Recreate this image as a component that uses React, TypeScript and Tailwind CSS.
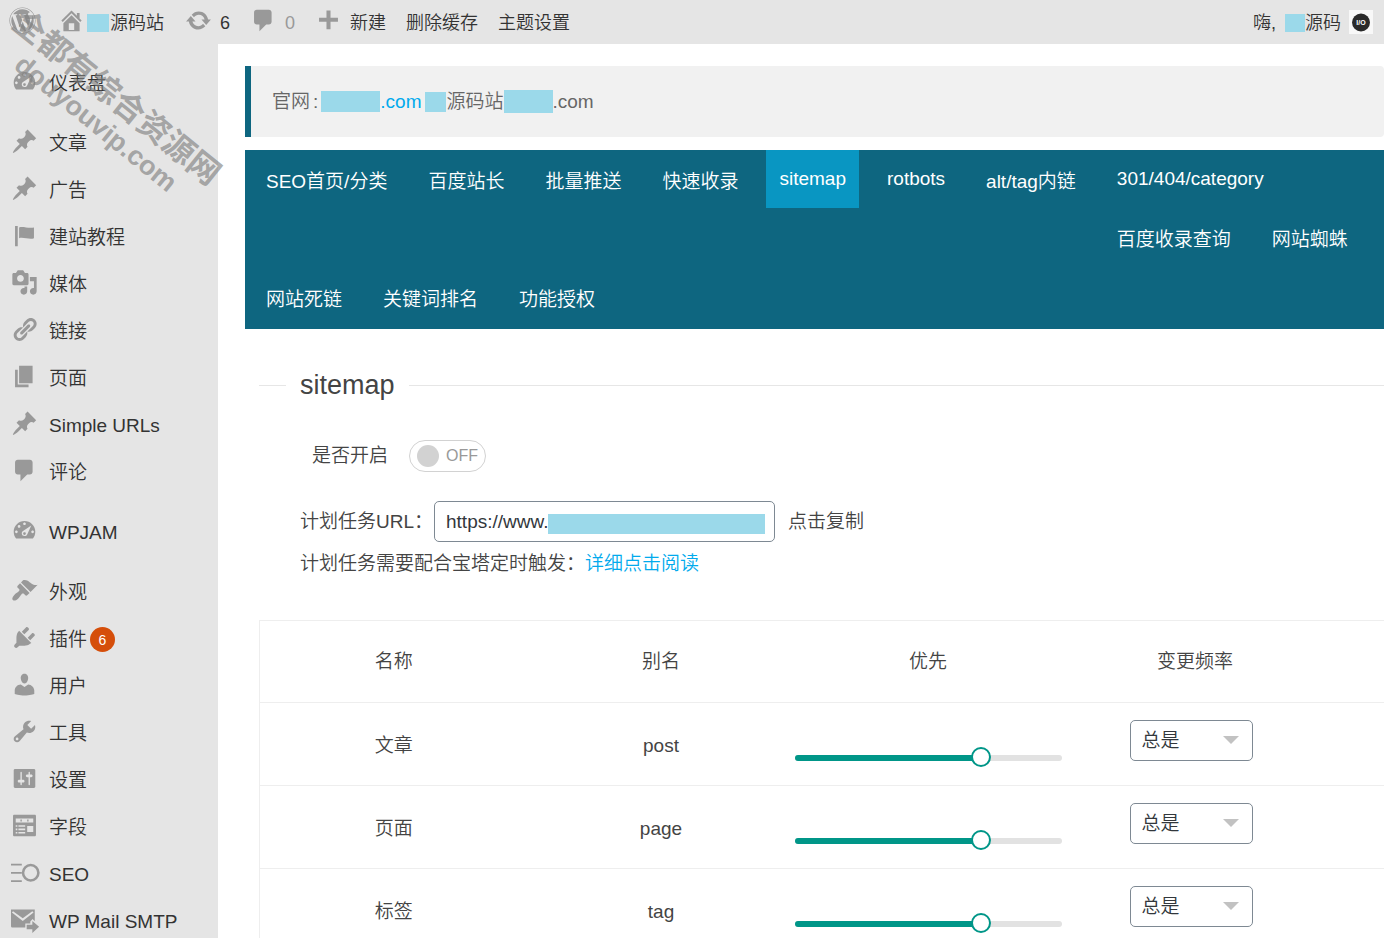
import { useState } from "react";
import type { ReactNode } from "react";
import { FaWordpress } from "react-icons/fa";

const paths: Record<string, string> = {
  home: "M16 8.5l1.53 1.53-1.06 1.06L10 4.6l-6.47 6.49-1.06-1.06L10 2.5l4 4v-2h2v4zm-6-2.46l6 5.99V18H4v-5.97zM12 17v-5H8v5h4z",
  update:
    "M10.2 3.28c3.53 0 6.43 2.61 6.92 6h2.08l-3.5 4-3.5-4h2.32c-.45-1.97-2.21-3.45-4.32-3.45-1.45 0-2.73.71-3.54 1.78L4.95 5.66C6.23 4.2 8.11 3.28 10.2 3.28zm-.4 13.44c-3.52 0-6.43-2.61-6.92-6H.8l3.5-4c1.17 1.33 2.33 2.67 3.5 4H5.48c.45 1.97 2.21 3.45 4.32 3.45 1.45 0 2.73-.71 3.54-1.78l1.71 1.95c-1.28 1.46-3.15 2.38-5.25 2.38z",
  comment: "M5 2h9c1.1 0 2 .9 2 2v7c0 1.1-.9 2-2 2h-2l-5 5v-5H5c-1.1 0-2-.9-2-2V4c0-1.1.9-2 2-2z",
  plus: "M17 8v3h-5.5v5.5h-3V11H3V8h5.500V2.500h3V8z",
  dashboard:
    "M3.76 16h12.48c1.1-1.37 1.76-3.11 1.76-5 0-4.42-3.58-8-8-8s-8 3.58-8 8c0 1.89.66 3.63 1.76 5zM10 4c.55 0 1 .45 1 1s-.45 1-1 1-1-.45-1-1 .45-1 1-1zM6 6c.55 0 1 .45 1 1s-.45 1-1 1-1-.45-1-1 .45-1 1-1zM4 10c.55 0 1 .45 1 1s-.45 1-1 1-1-.45-1-1 .45-1 1-1zm12 0c.55 0 1 .45 1 1s-.45 1-1 1-1-.45-1-1 .45-1 1-1zM15 6.300L9.200 10.200C8.300 10.700 7.900 11.500 8 12.400c.1 1 .9 1.700 2 1.700 1 0 1.700-.5 2.100-1.400zM10 11.300c.6 0 1 .4 1 1s-.4 1-1 1-1-.4-1-1 .4-1 1-1z",
  pin: "M10.44 3.02l1.82-1.82 6.36 6.35-1.83 1.82c-1.05-.68-2.48-.57-3.41.36l-.75.75c-.92.93-1.04 2.35-.35 3.41l-1.83 1.82-2.41-2.41-2.8 2.79c-.42.42-3.38 2.71-3.8 2.29s1.86-3.39 2.28-3.81l2.79-2.79L4.1 9.36l1.83-1.82c1.05.69 2.48.57 3.4-.36l.75-.75c.93-.92 1.05-2.35.36-3.41z",
  flag: "M5 18V3H3v15h2zm1-6V4c3-1 7 1 11 0v8c-3 1.27-8-1-11 0z",
  media:
    "M13 11V4c0-.55-.45-1-1-1h-1.67L9 1H5L3.67 3H2c-.55 0-1 .45-1 1v7c0 .55.45 1 1 1h10c.55 0 1-.45 1-1zM7 4.5c1.38 0 2.5 1.12 2.5 2.5S8.38 9.5 7 9.5 4.5 8.38 4.5 7 5.62 4.5 7 4.5zM14 6h5v10.5c0 1.38-1.12 2.5-2.5 2.5S14 17.88 14 16.5s1.12-2.5 2.5-2.5c.17 0 .34.02.5.05V9h-3V6zm-4 8.05V13h2v3.5c0 1.38-1.12 2.5-2.5 2.5S7 17.88 7 16.5 8.12 14 9.5 14c.17 0 .34.02.5.05z",
  link: "M17.74 2.76c1.68 1.69 1.68 4.41 0 6.1l-1.53 1.52c-1.12 1.12-2.7 1.47-4.14 1.09l2.62-2.61.76-.77.76-.76c.84-.84.84-2.2 0-3.04-.84-.85-2.2-.85-3.04 0l-.77.76-3.38 3.38c-.37-1.44-.02-3.02 1.1-4.14l1.52-1.53c1.69-1.68 4.42-1.68 6.1 0zM8.59 13.43l5.34-5.34c.42-.42.42-1.1 0-1.52-.44-.43-1.13-.39-1.53 0l-5.33 5.34c-.42.42-.42 1.1 0 1.52.44.43 1.13.39 1.52 0zm-.76 2.29l4.14-4.15c.38 1.44.03 3.02-1.09 4.14l-1.52 1.53c-1.69 1.68-4.41 1.68-6.1 0-1.68-1.68-1.68-4.42 0-6.1l1.53-1.52c1.12-1.12 2.7-1.47 4.14-1.1l-4.14 4.15c-.85.84-.85 2.2 0 3.05.84.84 2.2.84 3.04 0z",
  page: "M6 15V2h10v13H6zm-1 1h8v2H3V5h2v11z",
  brush:
    "M14.48 11.06L7.41 3.99l1.5-1.5c.5-.56 2.3-.47 3.51.32 1.21.8 1.43 1.28 2.91 2.1 1.18.64 2.45 1.26 4.45.85zm-.71.71L6.7 4.7 4.93 6.47c-.39.39-.39 1.02 0 1.41l1.06 1.06c.39.39.39 1.03 0 1.42-.6.6-1.43 1.11-2.21 1.69-.35.26-.7.53-1.01.84C1.43 14.23.4 16.08 1.4 17.07c.99 1 2.84-.03 4.18-1.36.31-.31.58-.66.85-1.02.57-.78 1.08-1.61 1.69-2.21.39-.39 1.02-.39 1.41 0l1.06 1.06c.39.39 1.02.39 1.41 0z",
  plug: "M13.11 4.36L9.87 7.6 8 5.73l3.24-3.24c.35-.34 1.05-.2 1.56.32.52.51.66 1.21.31 1.55zm-8 1.77l.91-1.12 9.01 9.01-1.19.84c-.71.71-2.63 1.16-3.82 1.16H6.14L4.9 17.26c-.59.59-1.54.59-2.12 0-.59-.58-.59-1.53 0-2.12l1.24-1.24v-3.88c0-1.13.4-3.19 1.09-3.89zm7.26 3.97l3.24-3.24c.34-.35 1.04-.21 1.55.31.52.51.66 1.21.31 1.55l-3.24 3.25z",
  user: "M10 9.25c-2.27 0-2.73-3.44-2.73-3.44C7 4.02 7.82 2 9.97 2c2.16 0 2.98 2.02 2.71 3.81 0 0-.41 3.44-2.68 3.44zm0 2.57L12.72 10c2.39 0 4.52 2.33 4.52 4.53v2.49s-3.65 1.13-7.24 1.13c-3.65 0-7.24-1.13-7.24-1.13v-2.49c0-2.25 1.94-4.48 4.47-4.48z",
  wrench:
    "M16.68 9.77c-1.34 1.34-3.3 1.67-4.95.99l-5.41 6.52c-.99.99-2.59.99-3.58 0s-.99-2.59 0-3.57l6.52-5.42c-.68-1.65-.35-3.61.99-4.95 1.28-1.28 3.12-1.62 4.72-1.06l-2.89 2.89 2.82 2.82 2.86-2.87c.53 1.58.18 3.39-1.08 4.65zM3.81 16.21c.4.39 1.04.39 1.43 0 .4-.4.4-1.04 0-1.43-.39-.4-1.03-.4-1.43 0-.39.39-.39 1.03 0 1.43z",
  sliders:
    "M18 16V4c0-.55-.45-1-1-1H3c-.55 0-1 .45-1 1v12c0 .55.45 1 1 1h14c.55 0 1-.45 1-1zM8 11h1c.55 0 1 .45 1 1s-.45 1-1 1H8v1.5c0 .28-.22.5-.5.5s-.5-.22-.5-.5V13H6c-.55 0-1-.45-1-1s.45-1 1-1h1V5.5c0-.28.22-.5.5-.5s.5.22.5.5V11zm5-2h-1c-.55 0-1-.45-1-1s.45-1 1-1h1V5.5c0-.28.22-.5.5-.5s.5.22.5.5V7h1c.55 0 1 .45 1 1s-.45 1-1 1h-1v5.5c0 .28-.22.5-.5.5s-.5-.22-.5-.5V9z",
  form: "M2.500 2h15c.6 0 1 .4 1 1v14c0 .6-.4 1-1 1h-15c-.6 0-1-.4-1-1V3c0-.6.4-1 1-1zM3.500 4.800h13v3h-13zM7 5.600v1.400h1V5.600zM12 5.600v1.400h1V5.600zM3.500 9.800h1.200V11H3.500zM5.500 9.800h5V11h-5zM3.500 12.300h1.200v1.200H3.500zM5.500 12.300h5v1.200h-5zM3.500 14.800h1.200V16H3.500zM5.500 14.800h5V16h-5zM12 10.300h4.500v4.500H12z",
  mail: "M0 2.500h17.600v8.800l-1.600-1.600-1.700 1.700v1.500h-3.700V16H1.200C.5 16 0 15.500 0 14.800zM1.500 3.800l-.8 1 8 6.400 8-6.400-.9-1L8.700 9zM11.600 13.900h4.200v-2.700l5 4.200-5 4.600v-2.800h-4.200z",
};

function Icon({ name, className = "size-[27px]" }: { name: string; className?: string }) {
  return (
    <svg viewBox="0 0 20 20" className={`${className} shrink-0 overflow-visible`} fill="currentColor" fillRule="evenodd" aria-hidden="true">
      {name === "seo" ? (
        <g fill="none" stroke="currentColor">
          <path d="M0 4.200h8M0 10.200h8M0 16.300h8" strokeWidth="1.300" />
          <circle cx="14.600" cy="10.200" r="5.700" strokeWidth="1.900" />
        </g>
      ) : (
        <path d={paths[name]} />
      )}
    </svg>
  );
}

function Mask({ className }: { className: string }) {
  return <span className={`inline-block shrink-0 bg-[#9bd9ea] ${className}`} />;
}

const menu: { icon: string; label: string; badge?: string }[][] = [
  [{ icon: "dashboard", label: "仪表盘" }],
  [
    { icon: "pin", label: "文章" },
    { icon: "pin", label: "广告" },
    { icon: "flag", label: "建站教程" },
    { icon: "media", label: "媒体" },
    { icon: "link", label: "链接" },
    { icon: "page", label: "页面" },
    { icon: "pin", label: "Simple URLs" },
    { icon: "comment", label: "评论" },
  ],
  [{ icon: "dashboard", label: "WPJAM" }],
  [
    { icon: "brush", label: "外观" },
    { icon: "plug", label: "插件", badge: "6" },
    { icon: "user", label: "用户" },
    { icon: "wrench", label: "工具" },
    { icon: "sliders", label: "设置" },
    { icon: "form", label: "字段" },
    { icon: "seo", label: "SEO" },
    { icon: "mail", label: "WP Mail SMTP" },
  ],
];

function TopBar() {
  return (
    <header className="flex h-11 shrink-0 items-center justify-between bg-[#e5e5e5] pt-0.5 text-lg text-[#333]">
      <div className="flex items-center">
        <a href="#" aria-label="WordPress" className="ml-[9px] text-[#999]">
          <FaWordpress className="mb-1.5 size-[27px]" />
        </a>
        <a href="#" className="ml-[22px] flex items-center">
          <Icon name="home" className="mb-1.5 size-[27px] text-[#999]" />
          <Mask className="mr-px ml-0.5 h-[18px] w-[22px]" />
          源码站
        </a>
        <a href="#" className="ml-[21px] flex items-center">
          <Icon name="update" className="mb-1.5 size-[27px] text-[#999]" />
          <span className="ml-2">6</span>
        </a>
        <a href="#" className="ml-5 flex items-center text-[#999]">
          <Icon name="comment" className="mb-1.5 size-[27px]" />
          <span className="ml-2">0</span>
        </a>
        <a href="#" className="ml-5 flex items-center">
          <Icon name="plus" className="mb-1.5 size-[27px] text-[#999]" />
          <span className="ml-2">新建</span>
        </a>
        <a href="#" className="ml-5">删除缓存</a>
        <a href="#" className="ml-5">主题设置</a>
      </div>
      <a href="#" className="mr-[11px] flex items-center">
        嗨,
        <Mask className="ml-[9px] h-[18px] w-5" />
        源码
        <svg viewBox="0 0 24 24" className="mb-0.5 ml-2 size-6" aria-hidden="true">
          <rect width="24" height="24" fill="#f8f8f8" />
          <circle cx="12" cy="12.500" r="9" fill="#2a2a2a" />
          <text x="12" y="15" textAnchor="middle" fontSize="7" fontWeight="700" fill="#fff">I/O</text>
        </svg>
      </a>
    </header>
  );
}

function Sidebar() {
  return (
    <aside className="w-[218px] shrink-0 bg-[#e5e5e5] pt-4">
      <nav className="flex flex-col gap-[13px]">
        {menu.map((group, i) => (
          <ul key={i}>
            {group.map((item) => (
              <li key={item.label}>
                <a href="#" className="flex h-[47px] items-center pl-[11px] text-[#333]">
                  <span className="mb-1 text-[#999]">
                    <Icon name={item.icon} />
                  </span>
                  <span className="ml-[11px]">{item.label}</span>
                  {item.badge && (
                    <span className="ml-[3px] flex size-[25px] items-center justify-center rounded-full bg-[#d54e0a] text-sm text-white">
                      {item.badge}
                    </span>
                  )}
                </a>
              </li>
            ))}
          </ul>
        ))}
      </nav>
    </aside>
  );
}

function Tab({ children, active, latin }: { children: ReactNode; active?: boolean; latin?: boolean }) {
  return (
    <a
      href="#"
      className={`flex items-center whitespace-nowrap px-[13px] ${latin ? "h-[58px]" : "h-[60px] pt-[3px]"} ${active ? "bg-[#0996c2]" : ""}`}
    >
      {children}
    </a>
  );
}

function Tabs() {
  return (
    <nav className="mt-[13px] bg-[#0e6680] pb-px pl-2 text-white">
      <div className="flex items-start gap-[15px]">
        <Tab>SEO首页/分类</Tab>
        <Tab>百度站长</Tab>
        <Tab>批量推送</Tab>
        <Tab>快速收录</Tab>
        <Tab latin active>sitemap</Tab>
        <Tab latin>rotbots</Tab>
        <Tab>alt/tag内链</Tab>
        <div>
          <Tab latin>301/404/category</Tab>
          <div className="flex gap-[15px]">
            <Tab>百度收录查询</Tab>
            <Tab>网站蜘蛛</Tab>
          </div>
        </div>
      </div>
      <div className="flex gap-[15px]">
        <Tab>网站死链</Tab>
        <Tab>关键词排名</Tab>
        <Tab>功能授权</Tab>
      </div>
    </nav>
  );
}

function Switch() {
  const [on, setOn] = useState(false);
  return (
    <button
      id="enabled"
      type="button"
      role="switch"
      aria-checked={on}
      onClick={() => setOn(!on)}
      className="flex h-8 w-[77px] items-center gap-[7px] rounded-full border border-[#d2d2d2] bg-white pl-[7px] text-base text-[#999]"
    >
      <span className="size-[22px] rounded-full bg-[#d2d2d2]" />
      {on ? "ON" : "OFF"}
    </button>
  );
}

function Row({ name, slug }: { name: string; slug: string }) {
  const [value, setValue] = useState(70);
  return (
    <tr className="h-[83px] border-b border-[#eee]">
      <td className="pt-[3px]">{name}</td>
      <td className="pt-[3px]">{slug}</td>
      <td className="pt-[27px]">
        <div className="relative h-1.5 rounded-full bg-[#e2e2e2]">
          <div className="h-1.5 rounded-full bg-[#009688]" style={{ width: `${value}%` }} />
          <input
            type="range"
            aria-label={`${name}优先`}
            value={value}
            onChange={(e) => setValue(Number(e.target.value))}
            className="absolute -inset-x-[10px] -top-2 h-5 cursor-pointer appearance-none bg-transparent [&::-webkit-slider-thumb]:size-5 [&::-webkit-slider-thumb]:appearance-none [&::-webkit-slider-thumb]:rounded-full [&::-webkit-slider-thumb]:border-2 [&::-webkit-slider-thumb]:border-solid [&::-webkit-slider-thumb]:border-[#009688] [&::-webkit-slider-thumb]:bg-white"
          />
        </div>
      </td>
      <td className="pr-2 pb-[7px]">
        <div className="relative mx-auto w-[123px]">
          <select
            aria-label={`${name}变更频率`}
            className="block h-[41px] w-full appearance-none rounded-[5px] border border-[#7e8993] bg-white pl-[11px] text-[#32373c]"
          >
            <option>总是</option>
            <option>每天</option>
            <option>每周</option>
          </select>
          <svg viewBox="0 0 16 8" className="pointer-events-none absolute top-4 right-[14px] h-2 w-4" aria-hidden="true">
            <path d="M0 0h16L8 8z" fill="#c2c2c2" />
          </svg>
        </div>
      </td>
      <td />
    </tr>
  );
}

export default function App() {
  return (
    <div className="relative flex h-screen flex-col overflow-hidden bg-white font-['Liberation_Sans','Noto_Sans_CJK_SC',sans-serif] text-[19px] leading-7 font-[350] text-[#444]">
      <TopBar />
      <div className="flex min-h-0 flex-1">
        <Sidebar />
        <main className="min-w-0 flex-1 overflow-hidden pt-[22px] pl-[27px]">
          <div className="flex h-[71px] items-center rounded-r-sm border-l-[6px] border-[#0e6680] bg-[#f1f1f1] pl-[21px] text-[#666]">
            官网<span className="mx-[3px]">:</span>
            <a href="#" className="flex items-center text-[#01aaed]">
              <Mask className="h-[21px] w-[59px]" />
              .com
            </a>
            <Mask className="ml-1 h-5 w-[21px]" />
            源码站
            <Mask className="h-[23px] w-[49px]" />
            .com
          </div>
          <Tabs />
          <fieldset className="mt-[34px] ml-[14px] border-t border-[#e6e6e6]">
            <legend className="ml-[27px] px-[14px] text-[27px] leading-[44px]">sitemap</legend>
            <div className="mt-[33px] ml-[53px] flex items-center gap-[21px]">
              <label htmlFor="enabled">是否开启</label>
              <Switch />
            </div>
            <div className="mt-[29px] ml-[41px] flex items-center">
              <label htmlFor="cron-url">计划任务URL：</label>
              <div className="relative ml-px w-[341px]">
                <input
                  id="cron-url"
                  type="text"
                  defaultValue="https://www."
                  className="block h-[41px] w-full rounded-[5px] border border-[#7e8993] px-[11px] text-[#32373c]"
                />
                <Mask className="absolute top-[13px] right-[10px] h-5 w-[217px]" />
              </div>
              <button type="button" className="ml-[13px]">点击复制</button>
            </div>
            <p className="mt-2 ml-[41px]">
              计划任务需要配合宝塔定时触发：<a href="#" className="text-[#01aaed]">详细点击阅读</a>
            </p>
          </fieldset>
          <div className="mt-[42px] pl-[14px]">
            <table className="w-full table-fixed border-collapse border border-r-0 border-[#eee] text-center">
              <colgroup>
                <col className="w-[268px]" />
                <col className="w-[267px]" />
                <col className="w-[267px]" />
                <col className="w-[267px]" />
                <col />
              </colgroup>
              <thead>
                <tr className="h-[82px] border-b border-[#eee]">
                  <th className="font-[350]">名称</th>
                  <th className="font-[350]">别名</th>
                  <th className="font-[350]">优先</th>
                  <th className="font-[350]">变更频率</th>
                  <th />
                </tr>
              </thead>
              <tbody>
                <Row name="文章" slug="post" />
                <Row name="页面" slug="page" />
                <Row name="标签" slug="tag" />
              </tbody>
            </table>
          </div>
        </main>
      </div>
      <div className="pointer-events-none absolute top-[78px] -left-[24px] w-[260px] rotate-[39deg] text-center leading-[33px] font-bold whitespace-nowrap text-[#808080]/65">
        <div className="text-[32px]">全都有综合资源网</div>
        <div className="text-[27px]">douyouvip.com</div>
      </div>
    </div>
  );
}
